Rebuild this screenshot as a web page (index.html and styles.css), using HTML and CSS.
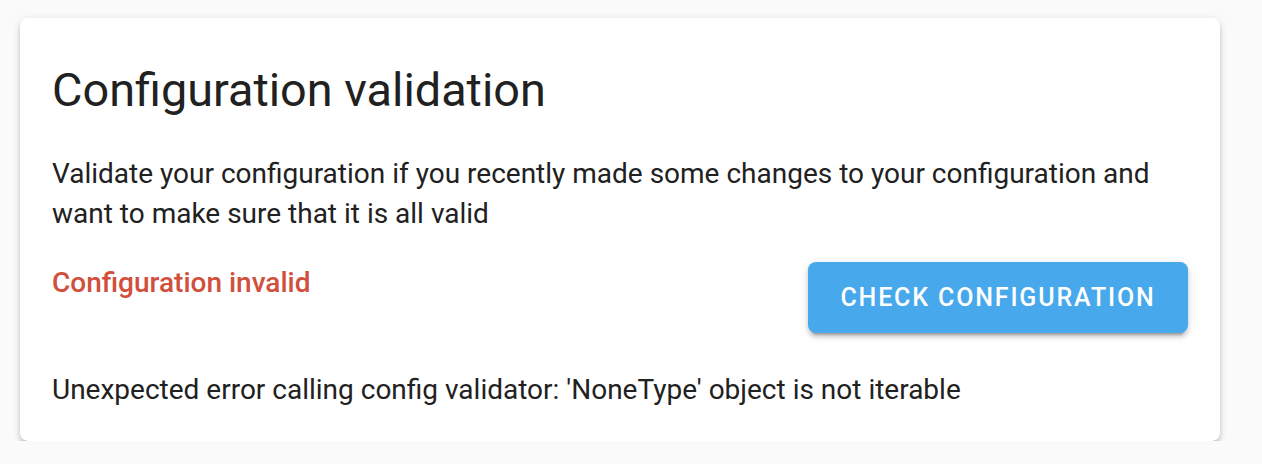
FILE: index.html
```html
<!DOCTYPE html>
<html>
<head>
<meta charset="utf-8">
<link rel="stylesheet" href="styles.css">
</head>
<body>
<div class="card">
  <h1 class="card-title">Configuration validation</h1>
  <p class="desc">Validate your configuration if you recently made some changes to your configuration and want to make sure that it is all valid</p>
  <div class="status-row">
    <span class="invalid">Configuration invalid</span>
    <button class="check-btn">CHECK CONFIGURATION</button>
  </div>
  <p class="error">Unexpected error calling config validator: 'NoneType' object is not iterable</p>
</div>
</body>
</html>
```

FILE: styles.css
```css
html, body {
  margin: 0;
  padding: 0;
  background: #fafafa;
}
body {
  font-family: Roboto, "Liberation Sans", sans-serif;
  color: #212121;
  padding: 18px 0 0 20px;
}
.card {
  box-sizing: border-box;
  width: 1200px;
  background: #fff;
  border-radius: 8px;
  box-shadow: 0 4px 4px 0 rgba(0,0,0,0.14), 0 2px 10px 0 rgba(0,0,0,0.12), 0 6px 2px -4px rgba(0,0,0,0.2);
  padding: 40px 32px 31px 32px;
}
.card-title {
  margin: 0;
  font-size: 46.8px;
  line-height: 64px;
  font-weight: 400;
}
.desc {
  margin: 32px 0 0 0;
  font-size: 28px;
  line-height: 40px;
}
.status-row {
  margin-top: 26px;
  display: flex;
  justify-content: space-between;
  align-items: flex-start;
}
.invalid {
  margin-top: 3px;
  color: #d04f3d;
  font-weight: 500;
  font-size: 28px;
  line-height: 40px;
}
.check-btn {
  margin-top: 2px;
  height: 71px;
  width: 380px;
  border: none;
  border-radius: 8px;
  background: #48a8ec;
  color: #fff;
  font-family: Roboto, "Liberation Sans", sans-serif;
  font-size: 25px;
  font-weight: 500;
  letter-spacing: 1.85px;
  box-shadow: 0 6px 2px -4px rgba(0,0,0,0.2), 0 4px 4px 0 rgba(0,0,0,0.14), 0 2px 10px 0 rgba(0,0,0,0.12);
  padding: 0;
}
.error {
  margin: 37px 0 0 0;
  font-size: 28px;
  line-height: 40px;
}
```
